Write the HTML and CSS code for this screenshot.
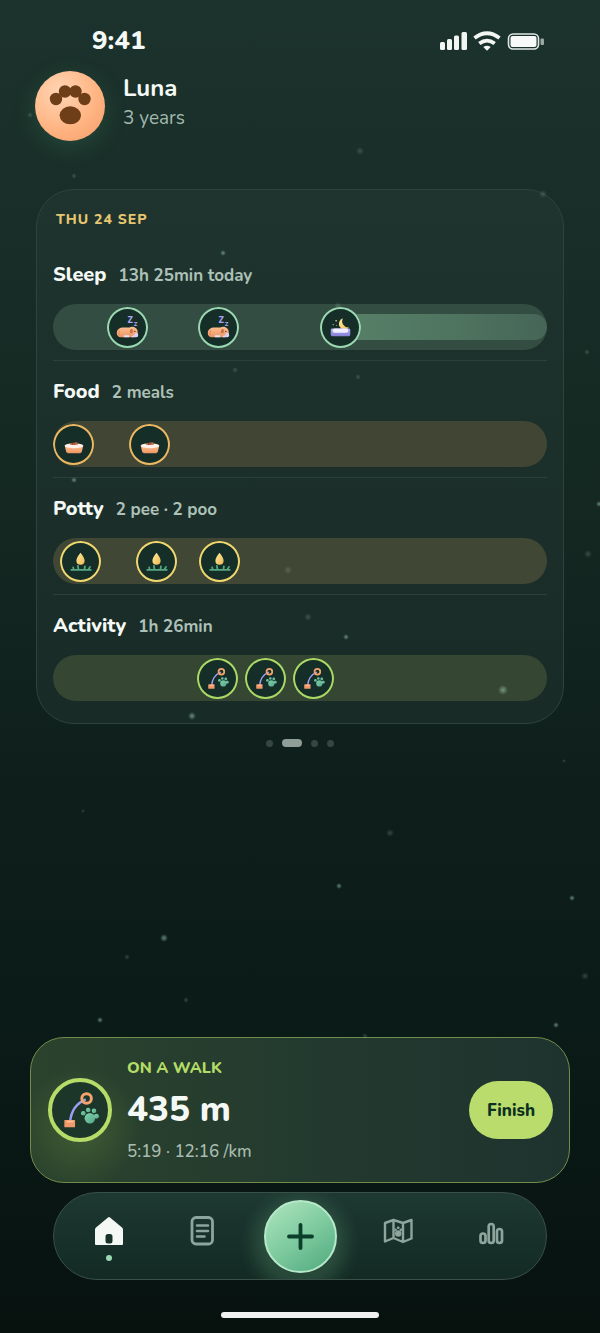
FILE: index.html
```html
<!DOCTYPE html>
<html lang="en">
<head>
<meta charset="utf-8">
<meta name="viewport" content="width=device-width, initial-scale=1">
<title>Luna</title>
<link rel="stylesheet" href="styles.css">
</head>
<body>
<svg class="defs" aria-hidden="true">
  <defs>
    <linearGradient id="fur" x1="0" y1="0" x2="0" y2="1"><stop offset="0" stop-color="#ffc093"/><stop offset="1" stop-color="#ec9562"/></linearGradient>
    <linearGradient id="bed" x1="0" y1="0" x2="0" y2="1"><stop offset="0" stop-color="#b3aef5"/><stop offset="1" stop-color="#8480d4"/></linearGradient>
    <linearGradient id="gold" x1="0" y1="0" x2="1" y2="1"><stop offset="0" stop-color="#ffeb9d"/><stop offset="1" stop-color="#efb953"/></linearGradient>
    <linearGradient id="mint" x1="0" y1="0" x2="1" y2="1"><stop offset="0" stop-color="#7fd3b0"/><stop offset="1" stop-color="#56a684"/></linearGradient>
    <radialGradient id="glow"><stop offset="0" stop-color="#9bc9b4"/><stop offset="1" stop-color="#9bc9b4" stop-opacity="0"/></radialGradient>
    <symbol id="nap" viewBox="0 0 42 42">
      <text x="21" y="16" font-size="9" class="zed">Z</text>
      <text x="27.500" y="19.500" font-size="6" class="zed">Z</text>
      <path d="M10 27c0-4 3-6 7-6h6c2-1 5-1 7 1 1.500 1.500 1.500 3 1.500 5s-1 4-4 4H14c-2 0-4-1-4-4z" fill="url(#fur)"/>
      <path d="M24.500 22.500c-1.500 2-1.500 4.500.3 4.500s2.200-2.500 1.200-4.500z" fill="#c8724a"/>
      <path d="M13 24q-1.500 2-.5 5" fill="none" stroke="#df8a59" stroke-width="1"/>
      <circle cx="28.500" cy="25" r=".6" fill="#3a2018"/>
      <rect x="17" y="29" width="6" height="2" rx="1" fill="#e5e0f8"/>
      <path d="M25 31q0-2 3-2 0-2.500 2-2.500t2 2.500q0 2-2 2z" fill="#d9d4f6"/>
    </symbol>
    <symbol id="night" viewBox="0 0 42 42">
      <path d="M23.500 11.500A6 6 0 1 0 30 21 6.500 6.500 0 0 1 23.500 11.500z" fill="url(#gold)"/>
      <circle cx="16.500" cy="14" r=".8" fill="#ffe9a0"/><circle cx="13.500" cy="18" r=".6" fill="#d8d3ff"/><circle cx="17" cy="19" r=".5" fill="#d8d3ff"/>
      <rect x="11" y="22" width="20" height="8" rx="1.500" fill="url(#bed)"/>
      <rect x="13" y="22" width="16" height="4.500" rx="2.200" fill="#f2f0ff"/>
    </symbol>
    <symbol id="bowl" viewBox="0 0 42 42">
      <path d="M12 22h19l-1.500 6.500q-.5 1.500-2 1.500h-12q-1.500 0-2-1.500z" fill="url(#fur)"/>
      <ellipse cx="21.500" cy="22.300" rx="9.500" ry="2.500" fill="#fff1ea"/>
      <path d="M17 21q1-2 2.500-1.200 1-1.500 2.500-.5 1-1.200 2.500-.5 1.500 0 1 2.200-4 1-8.500 0z" fill="#a95b3a"/>
      <circle cx="20" cy="20.500" r=".7" fill="#7f3f27"/><circle cx="24" cy="20.500" r=".7" fill="#d27d50"/>
    </symbol>
    <symbol id="drop" viewBox="0 0 42 42">
      <path d="M21 12q4.200 5 4.200 8.200a4.200 4.200 0 0 1-8.400 0Q16.800 17 21 12z" fill="url(#gold)"/>
      <path d="M11.500 29.700h20M14 29.500l-.5-2.500M19 29.500l-.7-4M25 29.500l.5-3.500M29 29.500l1.700-3" fill="none" stroke="#56a882" stroke-width="1.800" stroke-linecap="round"/>
    </symbol>
    <symbol id="leash" viewBox="0 0 42 42">
      <path d="M24.500 14.500Q16 18 15 28" fill="none" stroke="#9d9cf0" stroke-width="1.500"/>
      <circle cx="25" cy="14" r="2.900" fill="none" stroke="#f5a46e" stroke-width="1.800"/>
      <rect x="11.500" y="27" width="6.500" height="4.500" rx=".4" fill="#f09a6b"/>
      <rect x="13" y="27.500" width="4" height="1" fill="#ffc49d"/>
      <g fill="url(#mint)"><circle cx="27" cy="26" r="3.200"/><circle cx="23" cy="23" r="1.400"/><circle cx="26" cy="21" r="1.400"/><circle cx="29.500" cy="21.500" r="1.400"/><circle cx="31" cy="24.800" r="1.500"/></g>
    </symbol>
  </defs>
</svg>

<div class="screen">
  <div class="status">
    <span class="clock">9:41</span>
    <svg class="signals" viewBox="0 0 106 20" aria-label="Signal, Wi-Fi and battery">
      <g fill="#f1f6f3"><rect x="0" y="11" width="5" height="8" rx="1.500"/><rect x="7" y="8" width="5" height="11" rx="1.500"/><rect x="14" y="4.500" width="5" height="14.500" rx="1.500"/><rect x="21.500" y="1" width="5.500" height="18" rx="1.500"/></g>
      <g fill="none" stroke="#f1f6f3" stroke-width="3.800"><path d="M34.500 7q12.500-9.500 25 0"/><path d="M39.300 12.600q7.700-6 15.400 0"/></g>
      <path d="M43.300 16q3.700-2.500 7.400 0L47 19.800z" fill="#f1f6f3"/>
      <rect x="68.500" y="3" width="30" height="15" rx="4.500" fill="none" stroke="#dfe7e3" stroke-width="1.600"/>
      <rect x="70.500" y="5" width="26" height="11" rx="2" fill="#f7faf8"/>
      <rect x="100.500" y="7.500" width="3.500" height="6.500" rx="1" fill="#9ba9a4"/>
    </svg>
  </div>

  <header class="profile">
    <svg class="avatar" viewBox="0 0 70 70" role="img" aria-label="Paw">
      <g fill="#6e3e19"><circle cx="21" cy="28" r="6.200"/><circle cx="30" cy="20.500" r="6.200"/><circle cx="40.500" cy="20.500" r="6.200"/><circle cx="49.500" cy="28" r="6.200"/><ellipse cx="35.300" cy="44.300" rx="10.700" ry="9"/></g>
    </svg>
    <div class="who">
      <h1 class="name">Luna</h1>
      <p class="age">3 years</p>
    </div>
  </header>

  <main class="day">
    <h2 class="date">THU 24 SEP</h2>
    <section class="row sleep">
      <div class="head"><h3>Sleep</h3><span>13h 25min today</span></div>
      <div class="track">
        <div class="span" style="left:58.3%"></div>
        <svg class="marker" style="left:15.2%"><use href="#nap"/></svg>
        <svg class="marker" style="left:33.7%"><use href="#nap"/></svg>
        <svg class="marker" style="left:58.3%"><use href="#night"/></svg>
      </div>
    </section>
    <section class="row food">
      <div class="head"><h3>Food</h3><span>2 meals</span></div>
      <div class="track">
        <svg class="marker" style="left:4.25%"><use href="#bowl"/></svg>
        <svg class="marker" style="left:19.6%"><use href="#bowl"/></svg>
      </div>
    </section>
    <section class="row potty">
      <div class="head"><h3>Potty</h3><span>2 pee · 2 poo</span></div>
      <div class="track">
        <svg class="marker" style="left:5.6%"><use href="#drop"/></svg>
        <svg class="marker" style="left:21.1%"><use href="#drop"/></svg>
        <svg class="marker" style="left:33.8%"><use href="#drop"/></svg>
      </div>
    </section>
    <section class="row activity">
      <div class="head"><h3>Activity</h3><span>1h 26min</span></div>
      <div class="track">
        <svg class="marker" style="left:33.4%"><use href="#leash"/></svg>
        <svg class="marker" style="left:43.2%"><use href="#leash"/></svg>
        <svg class="marker" style="left:52.8%"><use href="#leash"/></svg>
      </div>
    </section>
  </main>
  <div class="pager"><i></i><i class="on"></i><i></i><i></i></div>

  <svg class="stars" viewBox="0 0 600 1333" preserveAspectRatio="xMidYMid slice" aria-hidden="true">
    <g fill="url(#glow)">
      <g opacity=".6"><circle cx="223" cy="253" r="3"/><circle cx="74" cy="480" r="3"/><circle cx="192" cy="716" r="4"/><circle cx="164" cy="938" r="4"/><circle cx="100" cy="1020" r="3"/><circle cx="556" cy="1025" r="3"/><circle cx="599" cy="504" r="3"/><circle cx="339" cy="886" r="3"/><circle cx="572" cy="898" r="3"/><circle cx="503" cy="690" r="5"/><circle cx="346" cy="637" r="3"/></g>
      <g opacity=".25"><circle cx="30" cy="115" r="3"/><circle cx="74" cy="176" r="3"/><circle cx="360" cy="151" r="4"/><circle cx="543" cy="194" r="4"/><circle cx="587" cy="352" r="3"/><circle cx="338" cy="306" r="4"/><circle cx="235" cy="370" r="3"/><circle cx="358" cy="377" r="3"/><circle cx="288" cy="570" r="4"/><circle cx="308" cy="617" r="4"/><circle cx="588" cy="554" r="4"/><circle cx="564" cy="761" r="2"/><circle cx="83" cy="811" r="2"/><circle cx="390" cy="833" r="4"/><circle cx="127" cy="957" r="3"/><circle cx="186" cy="1000" r="3"/><circle cx="585" cy="976" r="4"/><circle cx="365" cy="1036" r="3"/></g>
    </g>
  </svg>

  <section class="walk">
    <svg class="walk-icon" viewBox="4 4 34 34" aria-hidden="true"><use href="#leash" width="42" height="42"/></svg>
    <div class="walk-text">
      <h2>ON A WALK</h2>
      <p class="distance">435 m</p>
      <p class="pace">5:19 · 12:16 /km</p>
    </div>
    <button class="finish" type="button">Finish</button>
  </section>

  <nav class="tabs">
    <a class="tab active" href="#home" aria-label="Home">
      <svg viewBox="0 0 32 32"><path fill="#f3f8f5" fill-rule="evenodd" d="M15 2.500q1-1 2 0L29 12.500q1 .8 1 2V29q0 1-1 1H3q-1 0-1-1V14.500q0-1.200 1-2zM15 19q-2.500 0-2.500 2.500V26q0 2.500 2.500 2.500h2q2.500 0 2.500-2.500v-4.500Q19.500 19 17 19z"/></svg>
    </a>
    <a class="tab" href="#notes" aria-label="Notes">
      <svg viewBox="0 0 32 32" fill="none" stroke="#8da59c" stroke-width="2.800" stroke-linecap="round"><rect x="6" y="2.500" width="20.500" height="26.500" rx="4"/><path d="M11 10.500h11M11 16h11M11 21.500h7.500" stroke-width="2.500"/></svg>
    </a>
    <button class="add" type="button" aria-label="Add">
      <svg viewBox="0 0 28 28" fill="none" stroke="#0b3f2b" stroke-width="3.800" stroke-linecap="round"><path d="M14.500 3v23M3 14.500h23"/></svg>
    </button>
    <a class="tab" href="#map" aria-label="Map">
      <svg viewBox="0 0 32 32" fill="none" stroke="#8da59c" stroke-width="2.400" stroke-linejoin="round"><path d="M3 8l8.500-3 9.500 3 8.500-3v18.500L21 27l-9.500-4L3 26.500zM11.500 5v18M21 8v19"/><g fill="#8da59c" stroke="none"><circle cx="16.200" cy="18.500" r="3.200"/><circle cx="13.600" cy="14.800" r="1.300"/><circle cx="16.200" cy="12.800" r="1.400"/><circle cx="18.900" cy="14.800" r="1.300"/></g></svg>
    </a>
    <a class="tab" href="#stats" aria-label="Statistics">
      <svg viewBox="0 0 32 32" fill="none" stroke="#8da59c" stroke-width="2.700"><rect x="5.500" y="18.500" width="5" height="9.500" rx="2.500"/><rect x="13.700" y="9" width="5" height="19" rx="2.500"/><rect x="22" y="14" width="5" height="14" rx="2.500"/></svg>
    </a>
  </nav>
  <div class="home-bar"></div>
</div>
</body>
</html>
```
FILE: styles.css
```css
* { box-sizing: border-box; }
body, h1, h2, h3, p { margin: 0; }
body {
  font-family: Nunito, Lato, "Open Sans", sans-serif;
  color: #f4f9f6;
  background: #07120f;
}
.defs { position: absolute; width: 0; height: 0; }
.zed { font-weight: 800; fill: #a9a5f2; }
.screen {
  position: relative;
  display: flex;
  flex-direction: column;
  min-height: 100vh;
  padding: 25px 30px 15px;
  background: linear-gradient(180deg, #1c322c 0%, #182d27 20%, #142721 40%, #0e1f1b 60%, #0b1b18 77%, #07120f 100%);
}
.stars { position: absolute; inset: 0; width: 100%; height: 100%; pointer-events: none; }

.status {
  display: flex;
  align-items: center;
  justify-content: space-between;
  height: 32px;
  margin: 0 24px 14px 62px;
}
.clock { font-size: 26px; line-height: 32px; font-weight: 800; }
.signals { width: 106px; height: 20px; }

.profile { display: flex; align-items: center; gap: 18px; margin: 0 5px 48px; }
.avatar {
  width: 70px;
  height: 70px;
  border-radius: 50%;
  background: radial-gradient(circle at 35% 30%, #ffd5b5, #ffb583 55%, #f29b66);
  box-shadow: 0 6px 24px rgba(86, 180, 125, .2);
}
.who { padding-bottom: 8px; }
.name { font-size: 24px; line-height: 32px; font-weight: 700; }
.age { font-size: 19px; line-height: 28px; color: #a3b9af; }

.day {
  margin: 0 6px;
  padding: 20px 16px 12px;
  border: 1px solid #2d433c;
  border-radius: 38px;
  background: linear-gradient(180deg, #1f342e, #192b27);
}
.date {
  margin: 0 3px 14px;
  font-size: 14px;
  line-height: 20px;
  font-weight: 800;
  letter-spacing: 1px;
  color: #e6c670;
}
.row { padding: 18px 0 10px; border-bottom: 1px solid #2a403a; }
.row:last-child { border-bottom: 0; }
.head { display: flex; align-items: baseline; gap: 12px; height: 26px; margin-bottom: 16px; }
.head h3 { font-size: 20px; line-height: 26px; font-weight: 800; }
.head span { font-size: 17px; line-height: 26px; font-weight: 700; color: #adc1b8; }
.track { position: relative; height: 46px; border-radius: 23px; overflow: hidden; background: #344d43; }
.food .track { background: #404633; }
.potty .track { background: #404735; }
.activity .track { background: #354733; }
.span {
  position: absolute;
  top: 10px;
  right: 0;
  bottom: 10px;
  border-radius: 0 13px 13px 0;
  background: linear-gradient(90deg, #588068, #4f7560 50%, #466657);
}
.marker {
  position: absolute;
  top: 3px;
  width: 41px;
  height: 41px;
  margin-left: -21px;
  border-radius: 50%;
  background: #152e27;
  box-shadow: inset 0 0 0 2px #9bd8b2;
}
.food .marker { box-shadow: inset 0 0 0 2px #edb863; }
.potty .marker { box-shadow: inset 0 0 0 2px #f1d770; }
.activity .marker { box-shadow: inset 0 0 0 2px #acd965; }

.pager { display: flex; justify-content: center; align-items: center; gap: 9px; height: 8px; margin: 15px 0 32px; }
.pager i { width: 7px; height: 7px; border-radius: 4px; background: #374640; }
.pager .on { width: 20px; height: 8px; background: #919e98; }

.walk {
  display: flex;
  align-items: center;
  gap: 15px;
  margin-top: auto;
  padding: 16px 16px 16px 17px;
  border: 1px solid #718d4b;
  border-radius: 34px;
  background:
    radial-gradient(circle at 50px 90px, rgba(130, 175, 65, .25), transparent 60px),
    linear-gradient(90deg, #2b432d, #233a2f 50%, #1e332e);
}
.walk-icon {
  flex: none;
  width: 64px;
  height: 64px;
  border: 4px solid #b5dc68;
  border-radius: 50%;
  background: #1c3729;
}
.walk-text { flex: 1; }
.walk h2 { font-size: 16px; line-height: 28px; font-weight: 800; color: #b3dc66; }
.distance { font-size: 35px; line-height: 56px; font-weight: 800; }
.pace { font-size: 17px; line-height: 28px; font-weight: 500; color: #a9bcb0; }
.finish {
  height: 58px;
  padding: 0 18px;
  border: 0;
  border-radius: 29px;
  background: #b9dc6c;
  color: #0c3021;
  font: inherit;
  font-size: 17px;
  font-weight: 800;
}

.tabs {
  display: grid;
  grid-template-columns: 1fr 1fr 103px 1fr 1fr;
  align-items: center;
  justify-items: center;
  height: 88px;
  margin: 9px 23px 32px;
  padding: 0 8px;
  border: 1px solid #3a4f47;
  border-radius: 44px;
  background:
    radial-gradient(circle at 50% 60%, rgba(120, 190, 140, .2) 36px, rgba(120, 190, 140, .04) 53px, transparent 60px),
    linear-gradient(180deg, #1e3932, #122a23);
}
.tab { position: relative; display: flex; padding-bottom: 10px; }
.tab svg { width: 32px; height: 32px; }
.tab.active::after {
  content: "";
  position: absolute;
  left: 13px;
  bottom: -4px;
  width: 6px;
  height: 6px;
  border-radius: 50%;
  background: #9bd8b2;
}
.add {
  display: flex;
  align-items: center;
  justify-content: center;
  width: 73px;
  height: 73px;
  padding: 0;
  border: 2px solid #b6e9c9;
  border-radius: 50%;
  background: linear-gradient(145deg, #afe5bf, #7ac89c 55%, #4ea87c);
}
.add svg { width: 28px; height: 28px; }
.home-bar { width: 158px; height: 6px; margin: 0 auto; border-radius: 3px; background: #eff0ef; }
```
